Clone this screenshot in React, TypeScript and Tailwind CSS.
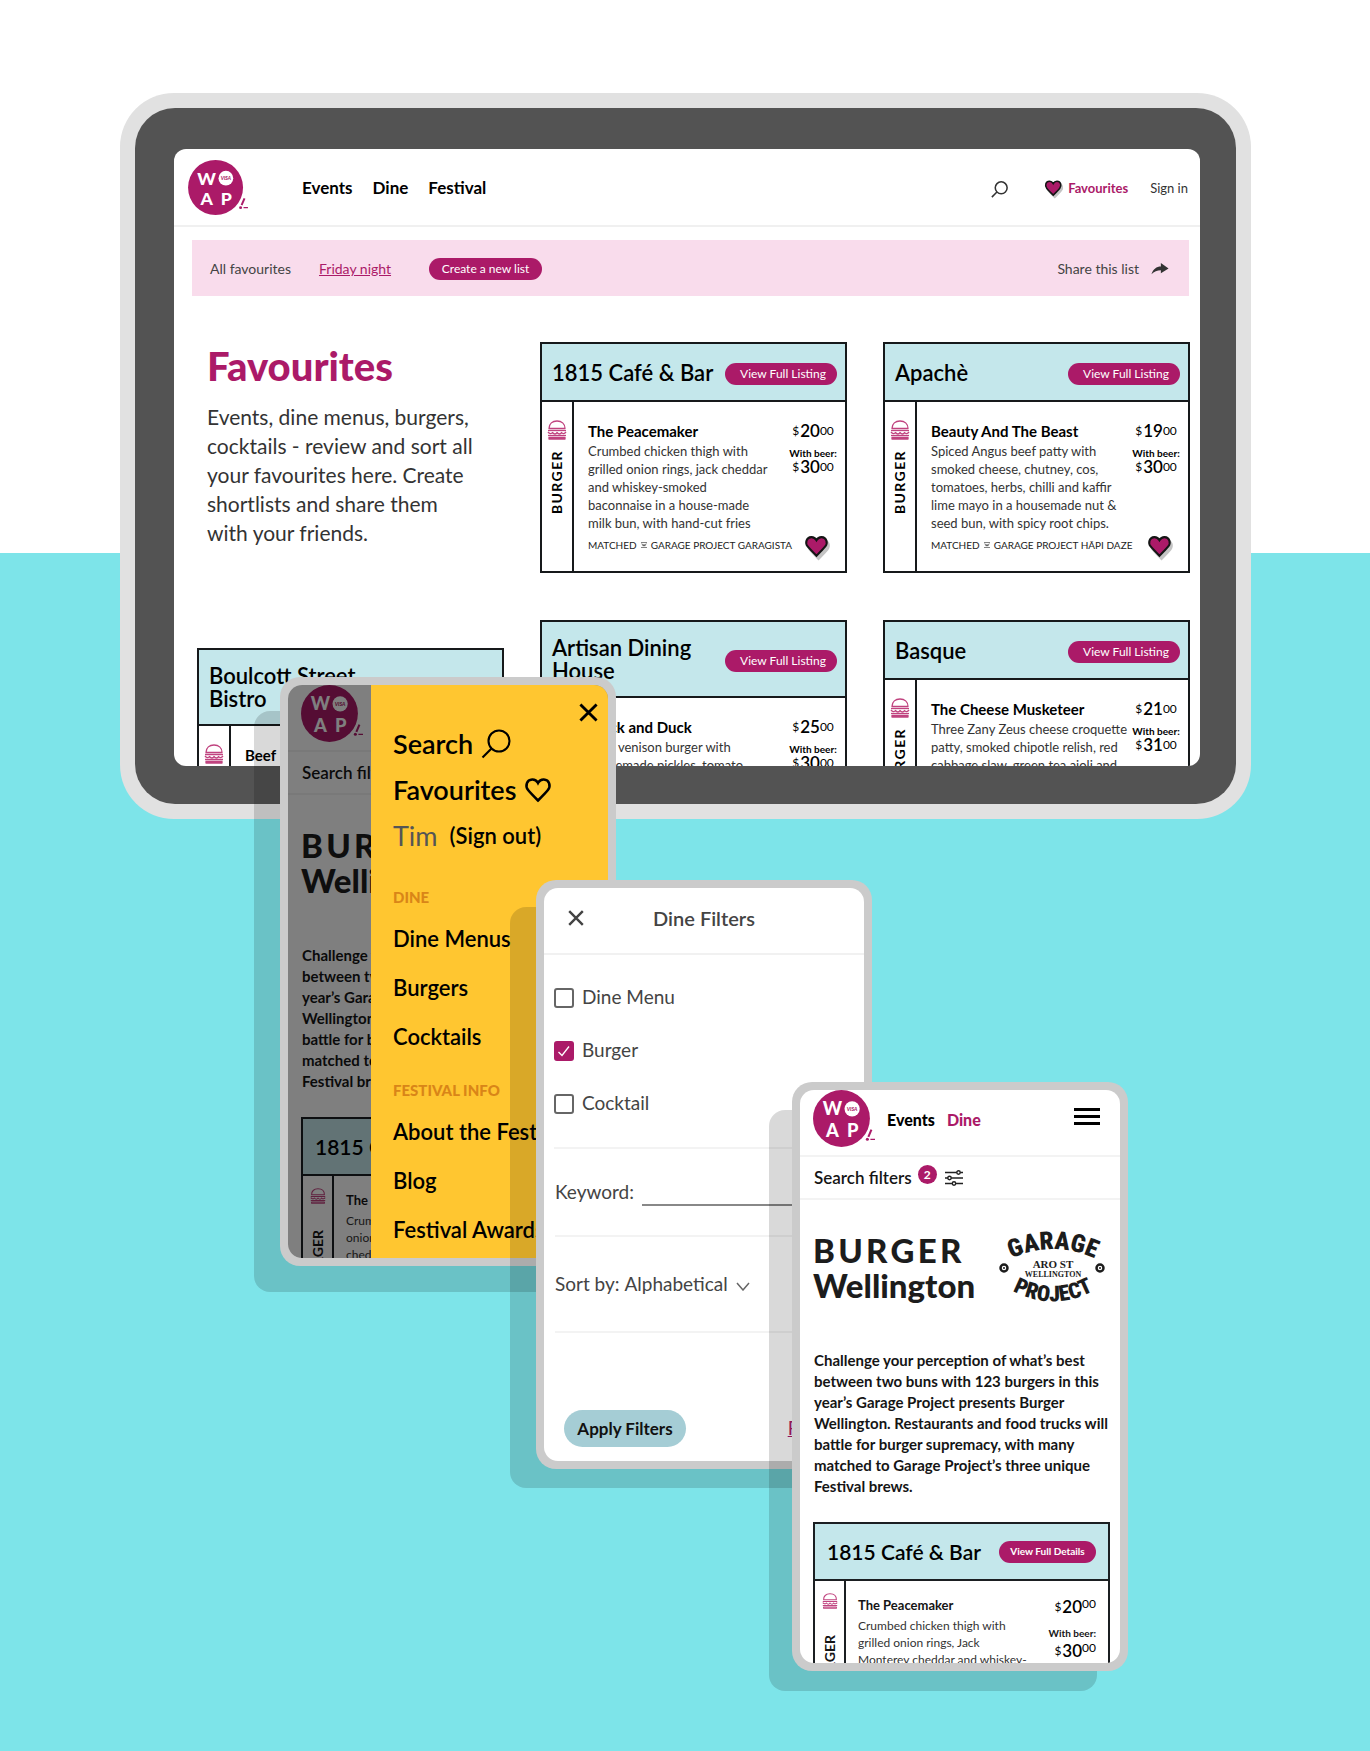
import type { ReactNode } from "react";

function Logo({ className }: { className: string }) {
  return (
    <svg viewBox="0 0 62 56" className={className} role="img" aria-label="Visa Wellington On a Plate">
      <circle cx="28" cy="28" r="28" fill="#ab1a68" />
      <g fill="#fff" fontFamily="Lato, sans-serif" fontWeight="900" fontSize="18" textAnchor="middle">
        <text x="19" y="25">W</text>
        <text x="19" y="46">A</text>
        <text x="39" y="46">P</text>
      </g>
      <circle cx="38.500" cy="18.500" r="7.500" fill="#fff" />
      <text x="38.500" y="20.500" fill="#ab1a68" fontFamily="Lato, sans-serif" fontWeight="900" fontStyle="italic" fontSize="5" textAnchor="middle">
        VISA
      </text>
      <path d="M57.500 39 L54.500 46" stroke="#ab1a68" strokeWidth="2" />
      <circle cx="53.500" cy="48.500" r="1.500" fill="#ab1a68" />
      <path d="M56.500 48.500 H61" stroke="#ab1a68" strokeWidth="1.200" />
    </svg>
  );
}

function SearchIcon({ className, strokeWidth = 1.6 }: { className: string; strokeWidth?: number }) {
  return (
    <svg viewBox="0 0 20 20" className={className} fill="none" stroke="currentColor" strokeWidth={strokeWidth} aria-hidden="true">
      <circle cx="12" cy="8" r="7" />
      <path d="M7 13 L1 19" />
    </svg>
  );
}

const HEART = "M12 21 C9 18 5.500 14.500 3.500 12 C0.800 8.500 2.200 3.300 7 3 C9.300 2.900 11 4.200 12 6 C13 4.200 14.700 2.900 17 3 C21.800 3.300 23.200 8.500 20.500 12 C18.500 14.500 15 18 12 21 Z";

function FullHeart({ className }: { className: string }) {
  return (
    <svg viewBox="0 0 26 26" className={className} aria-hidden="true">
      <path d={HEART} fill="#c4c4c4" stroke="#c4c4c4" strokeWidth="2" transform="translate(2 3)" />
      <path d={HEART} fill="#ab1a68" stroke="#151515" strokeWidth="2" />
    </svg>
  );
}

function BurgerIcon({ className }: { className: string }) {
  return (
    <svg viewBox="0 0 20 20" className={className} fill="none" stroke="#c0437f" strokeWidth="1.300" strokeLinejoin="round" aria-hidden="true">
      <path d="M2 8.500 C2 3.500 5.500 1 10 1 C14.500 1 18 3.500 18 8.500 Z" />
      <path d="M1 10.500 H19" />
      <path d="M1 12 C2.500 14 4.500 14 5.500 12.500 C7 14.500 9 14.500 10 12.500 C11.500 14.500 13.500 14.500 14.500 12.500 C15.500 14 17.500 14 19 12" />
      <path d="M1 15.500 H19" />
      <path d="M2 17.500 H18 V19 H2 Z" />
    </svg>
  );
}

function CloseIcon({ className }: { className: string }) {
  return (
    <svg viewBox="0 0 20 20" className={className} fill="none" stroke="currentColor" strokeWidth="3" aria-hidden="true">
      <path d="M1.500 1.500 L18.500 18.500 M18.500 1.500 L1.500 18.500" />
    </svg>
  );
}

function Price({ amount, raised = false }: { amount: string; raised?: boolean }) {
  return (
    <span className="flex h-5 items-center text-black">
      <span className="mr-px text-xs">$</span>
      <span className="text-[17px] font-semibold">{amount}</span>
      <span className={raised ? "mb-1.5 text-xs leading-none" : "text-xs leading-none"}>00</span>
    </span>
  );
}

type Item = {
  title: string[];
  name: string;
  lines: string[];
  price: string;
  beer: string;
  matched: string;
};

function ListingCard({ title, name, lines, price, beer, matched }: Item) {
  return (
    <article className="border-2 border-[#16191b] bg-white">
      <header className="flex min-h-[58px] items-center justify-between border-b-2 border-[#16191b] bg-[#c4e7eb] py-3.5 pr-2 pl-2.5 text-black">
        <h2 className="text-[22px] leading-[23px] font-semibold whitespace-nowrap">
          {title.map((t) => (
            <span key={t} className="block">{t}</span>
          ))}
        </h2>
        <button className="mt-1 h-[22px] w-28 shrink-0 rounded-full bg-[#ab1a68] pl-1 text-xs text-white">View Full Listing</button>
      </header>
      <div className="flex">
        <div className="flex w-[32px] shrink-0 flex-col items-center gap-2.5 border-r-2 border-[#16191b] pt-[18px]">
          <BurgerIcon className="size-5" />
          <span className="rotate-180 text-sm leading-none font-bold tracking-widest [writing-mode:vertical-rl]">BURGER</span>
        </div>
        <div className="min-w-0 flex-1 pt-[19px] pr-2 pb-[14px] pl-3.5">
          <div className="flex justify-between">
            <div className="whitespace-nowrap">
              <h3 className="mb-px text-[15px] leading-5 font-bold text-black">{name}</h3>
              <p className="text-[13px] leading-[18px] text-[#333]">
                {lines.map((l) => (
                  <span key={l} className="block">{l}</span>
                ))}
              </p>
            </div>
            <div className="-ml-4 flex w-12 shrink-0 flex-col items-center whitespace-nowrap">
              <Price amount={price} />
              <span className="mt-1.5 text-[10px] leading-3 font-bold">With beer:</span>
              <span className="flex h-4 items-center"><Price amount={beer} /></span>
            </div>
          </div>
          <div className="mt-px flex h-6 items-center justify-between">
            <p className="flex items-center gap-1 text-[10px] whitespace-nowrap text-[#222]">
              MATCHED
              <svg viewBox="0 0 8 8" className="size-1.5" fill="none" stroke="#444" aria-hidden="true">
                <path d="M0 0.500 H8 M0 7.500 H8 M1 2 L3 5.500 L4 3 L5 5.500 L7 2" />
              </svg>
              {matched}
            </p>
            <button aria-label="Remove from favourites" className="mt-1 mr-1.5">
              <FullHeart className="size-[27px]" />
            </button>
          </div>
        </div>
      </div>
    </article>
  );
}

const CAFE: Item = {
  title: ["1815 Café & Bar"],
  name: "The Peacemaker",
  lines: ["Crumbed chicken thigh with", "grilled onion rings, jack cheddar", "and whiskey-smoked", "baconnaise in a house-made", "milk bun, with hand-cut fries"],
  price: "20",
  beer: "30",
  matched: "GARAGE PROJECT GARAGISTA",
};
const APACHE: Item = {
  title: ["Apachè"],
  name: "Beauty And The Beast",
  lines: ["Spiced Angus beef patty with", "smoked cheese, chutney, cos,", "tomatoes, herbs, chilli and kaffir", "lime mayo in a housemade nut &", "seed bun, with spicy root chips."],
  price: "19",
  beer: "30",
  matched: "GARAGE PROJECT HĀPI DAZE",
};
const ARTISAN: Item = {
  title: ["Artisan Dining", "House"],
  name: "Truck and Duck",
  lines: ["Wild venison burger with", "housemade pickles, tomato,"],
  price: "25",
  beer: "30",
  matched: "GARAGE PROJECT GARAGISTA",
};
const BASQUE: Item = {
  title: ["Basque"],
  name: "The Cheese Musketeer",
  lines: ["Three Zany Zeus cheese croquette", "patty, smoked chipotle relish, red", "cabbage slaw, green tea aioli and"],
  price: "21",
  beer: "31",
  matched: "GARAGE PROJECT HĀPI DAZE",
};
const BOULCOTT: Item = {
  title: ["Boulcott Street", "Bistro"],
  name: "Beef",
  lines: ["Beef patty with cheddar"],
  price: "25",
  beer: "30",
  matched: "GARAGE PROJECT HĀPI DAZE",
};

function Tablet() {
  return (
    <section className="mr-[119px] ml-[120px] rounded-[54px] bg-[#e1e1e1] p-[15px]">
      <div className="rounded-[40px] bg-[#535353] pt-[41px] pr-9 pb-[38px] pl-[39px]">
        <div className="h-[617px] overflow-hidden rounded-xl bg-white">
          <header className="flex h-[78px] items-center border-b-2 border-[#f0f0f0] pr-3 pl-3.5">
            <a href="#home"><Logo className="h-[55px] w-[61px]" /></a>
            <nav className="mt-0.5 ml-[53px] flex flex-1 gap-5 text-[17px] font-bold text-black">
              <a href="#events">Events</a>
              <a href="#dine">Dine</a>
              <a href="#festival">Festival</a>
            </nav>
            <div className="mt-1 flex items-center text-[13px] text-[#333]">
              <button aria-label="Search"><SearchIcon className="size-[17px]" strokeWidth={1.8} /></button>
              <a href="#favourites" className="ml-9 flex items-center gap-1 font-bold text-[#ab1a68]">
                <FullHeart className="size-5" />
                Favourites
              </a>
              <a href="#signin" className="ml-[22px]">Sign in</a>
            </div>
          </header>
          <div className="mt-[13px] mr-[11px] ml-[18px] flex h-14 items-center bg-[#f9dcec] pt-0.5 pr-5 pl-[18px] text-sm text-[#444]">
            <a href="#all">All favourites</a>
            <a href="#friday" className="ml-7 text-[#ab1a68] underline">Friday night</a>
            <button className="ml-[38px] h-[22px] w-[113px] rounded-full bg-[#ab1a68] text-xs text-white">Create a new list</button>
            <button className="ml-auto flex items-center gap-3">
              Share this list
              <svg viewBox="0 0 20 14" className="h-3 w-[18px]" fill="#333" aria-hidden="true">
                <path d="M0 13 C2 7 6 4 11 4 V0 L20 6.500 L11 12 V8.500 C7 8.500 3 10 0 13 Z" />
              </svg>
            </button>
          </div>
          <main className="mt-[46px] mr-2.5 ml-[23px] grid grid-cols-3 items-start gap-x-9">
            <div>
              <div className="h-[306px] pt-0.5 pl-2.5 whitespace-nowrap">
                <h1 className="text-[40px] leading-[44px] font-black text-[#ab1a68]">Favourites</h1>
                <p className="mt-3.5 text-[21px] leading-[29px] text-[#333]">
                  Events, dine menus, burgers,<br />
                  cocktails - review and sort all<br />
                  your favourites here. Create<br />
                  shortlists and share them<br />
                  with your friends.
                </p>
              </div>
              <ListingCard {...BOULCOTT} />
            </div>
            <div className="flex flex-col gap-[47px]">
              <ListingCard {...CAFE} />
              <ListingCard {...ARTISAN} />
            </div>
            <div className="flex flex-col gap-[47px]">
              <ListingCard {...APACHE} />
              <ListingCard {...BASQUE} />
            </div>
          </main>
        </div>
      </div>
    </section>
  );
}

function Phone({ className, children }: { className: string; children: ReactNode }) {
  return (
    <section className={`absolute h-[589px] w-[336px] rounded-[20px] bg-[#cbcbcb] p-2 ${className}`}>
      <div className="relative h-full overflow-hidden rounded-[14px] bg-white">{children}</div>
    </section>
  );
}

function GarageLogo() {
  return (
    <svg viewBox="0 0 110 74" className="h-[74px] w-[110px]" role="img" aria-label="Garage Project, Aro St Wellington" fill="#1c1c1c">
      <defs>
        <path id="arc-top" d="M10 30 Q55 8 100 30" />
        <path id="arc-bottom" d="M11 59 Q55 84 99 59" />
      </defs>
      <g fontFamily="'Roboto Condensed', Roboto, sans-serif" fontWeight="900" textAnchor="middle">
        <text fontSize="25">
          <textPath href="#arc-top" startOffset="50%">GARAGE</textPath>
        </text>
        <text fontSize="22">
          <textPath href="#arc-bottom" startOffset="50%">PROJECT</textPath>
        </text>
      </g>
      <g fontFamily="'Liberation Serif', serif" fontWeight="700" textAnchor="middle">
        <text x="55" y="38" fontSize="11">ARO ST</text>
        <text x="55" y="47" fontSize="8">WELLINGTON</text>
      </g>
      <g fill="#fff" stroke="#1c1c1c" strokeWidth="2.500">
        <circle cx="6" cy="38" r="3.500" />
        <circle cx="102" cy="38" r="3.500" />
      </g>
      <circle cx="6" cy="38" r="1" />
      <circle cx="102" cy="38" r="1" />
    </svg>
  );
}

function BurgerPage({ lines }: { lines: string[] }) {
  return (
    <div className="text-[#151515]">
      <header className="flex h-[67px] items-start border-b-2 border-[#f3f3f3] pr-5 pl-[13px]">
        <a href="#home"><Logo className="h-[57px] w-[63px]" /></a>
        <nav className="mt-[18px] ml-[11px] flex flex-1 gap-3 text-base leading-6 font-black text-black">
          <a href="#events">Events</a>
          <a href="#dine" className="text-[#ab1a68]">Dine</a>
        </nav>
        <button aria-label="Menu" className="mt-[18px] flex flex-col gap-1">
          <span className="h-[3px] w-[26px] bg-black" />
          <span className="h-[3px] w-[26px] bg-black" />
          <span className="h-[3px] w-[26px] bg-black" />
        </button>
      </header>
      <button className="flex h-[43px] w-full items-center border-b-2 border-[#f3f3f3] pl-3.5 text-[17px] font-semibold whitespace-nowrap">
        Search filters
        <span className="mb-1.5 ml-1.5 flex size-[19px] items-center justify-center rounded-full bg-[#ab1a68] text-xs font-bold text-white">2</span>
        <svg viewBox="0 0 18 16" className="ml-2 h-4 w-[18px]" fill="#fff" stroke="#222" strokeWidth="1.400" aria-hidden="true">
          <path d="M0 2.500 H18 M0 8 H18 M0 13.500 H18" />
          <circle cx="13.500" cy="2.500" r="1.700" />
          <circle cx="4.500" cy="8" r="1.700" />
          <circle cx="9" cy="13.500" r="1.700" />
        </svg>
      </button>
      <div className="flex items-start justify-between pt-[30px] pr-3 pl-[13px]">
        <h1 className="pt-[3px] whitespace-nowrap text-[#1c1c1c]">
          <span className="block text-[33px] leading-[34px] font-black tracking-widest">BURGER</span>
          <span className="block text-[33px] leading-9 font-black">Wellington</span>
        </h1>
        <GarageLogo />
      </div>
      <p className="mt-[46px] pl-3.5 text-[15px] leading-[21px] font-bold whitespace-nowrap">
        Challenge your perception of what’s best<br />
        between two buns with 123 burgers in this<br />
        year’s Garage Project presents Burger<br />
        Wellington. Restaurants and food trucks will<br />
        battle for burger supremacy, with many<br />
        matched to Garage Project’s three unique<br />
        Festival brews.
      </p>
      <article className="mt-[25px] mr-2.5 ml-[13px] border-2 border-[#1b1f22]">
        <header className="flex h-[57px] items-center justify-between border-b-2 border-[#1b1f22] bg-[#c4e7eb] pr-3 pl-3">
          <h2 className="text-[21px] font-semibold whitespace-nowrap text-black">1815 Café &amp; Bar</h2>
          <button className="h-[22px] w-[97px] shrink-0 rounded-full bg-[#ab1a68] text-[10px] font-bold text-white">View Full Details</button>
        </header>
        <div className="flex h-40">
          <div className="flex w-[31px] shrink-0 flex-col items-center gap-[26px] border-r-2 border-[#1b1f22] pt-3">
            <BurgerIcon className="size-4" />
            <span className="rotate-180 text-sm leading-none font-bold [writing-mode:vertical-rl]">BURGER</span>
          </div>
          <div className="flex flex-1 justify-between pt-3.5 pr-3 pl-3">
            <div className="whitespace-nowrap">
              <h3 className="mb-0.5 text-[13px] leading-5 font-bold">The Peacemaker</h3>
              <p className="text-xs leading-[17px] text-[#333]">
                {lines.map((l) => (
                  <span key={l} className="block">{l}</span>
                ))}
              </p>
            </div>
            <div className="-ml-8 flex flex-col items-end pt-0.5 whitespace-nowrap">
              <Price amount="20" raised />
              <span className="mt-2 text-[10px] leading-4 font-bold">With beer:</span>
              <Price amount="30" raised />
            </div>
          </div>
        </div>
      </article>
    </div>
  );
}

function MenuGroup({ title, items }: { title: string; items: string[] }) {
  return (
    <div>
      <h2 className="text-[15px] leading-5 font-black text-[#d98518]">{title}</h2>
      <ul className="mt-[7px] text-[22px] leading-[49px] font-semibold">
        {items.map((i) => (
          <li key={i}><a href="#menu">{i}</a></li>
        ))}
      </ul>
    </div>
  );
}

function SideMenu() {
  return (
    <div className="absolute inset-0 flex bg-black/50">
      <nav className="relative ml-[83px] flex-1 bg-[#ffc630] pl-[22px] whitespace-nowrap text-black">
        <button aria-label="Close menu" className="absolute top-[18px] right-2.5"><CloseIcon className="size-[19px]" /></button>
        <div className="pt-9 text-[27px] leading-[46px] font-semibold">
          <a href="#search" className="flex items-center gap-2">Search <SearchIcon className="size-[30px]" strokeWidth={1.4} /></a>
          <a href="#favourites" className="flex items-center gap-2">
            Favourites
            <svg viewBox="0 0 24 24" className="size-7" fill="none" stroke="currentColor" strokeWidth="2.200" aria-hidden="true"><path d={HEART} /></svg>
          </a>
          <p className="flex items-center gap-3">
            <span className="font-normal text-[#555]">Tim</span>
            <button className="text-[22px] font-semibold">(Sign out)</button>
          </p>
        </div>
        <div className="mt-[28px] flex flex-col gap-[19px]">
          <MenuGroup title="DINE" items={["Dine Menus", "Burgers", "Cocktails"]} />
          <MenuGroup title="FESTIVAL INFO" items={["About the Festival", "Blog", "Festival Awards"]} />
        </div>
      </nav>
    </div>
  );
}

function Option({ label, checked = false }: { label: string; checked?: boolean }) {
  return (
    <label className="flex h-[53px] items-center gap-2">
      <span className="relative flex size-5">
        <input type="checkbox" defaultChecked={checked} className="peer size-5 appearance-none rounded-[3px] border-2 border-[#666] bg-white checked:border-[#ab1a68] checked:bg-[#ab1a68]" />
        <svg viewBox="0 0 20 20" className="pointer-events-none absolute inset-0 hidden size-5 peer-checked:block" fill="none" stroke="#fff" strokeWidth="1.300" aria-hidden="true">
          <path d="M4.500 11 L8 14.500 L15 5.500" />
        </svg>
      </span>
      {label}
    </label>
  );
}

function Filters() {
  return (
    <form className="text-[19px] whitespace-nowrap text-[#444]">
      <header className="grid h-[67px] grid-cols-[60px_1fr_60px] items-center border-b-2 border-[#f1f1f1] pb-1.5">
        <button type="button" aria-label="Close filters" className="ml-6"><CloseIcon className="size-4" /></button>
        <h2 className="text-center text-xl font-semibold">Dine Filters</h2>
      </header>
      <div className="pr-2.5 pl-[11px]">
        <fieldset className="-ml-px border-b-2 border-[#f3f3f3] pt-4 pb-[17px]">
          <Option label="Dine Menu" />
          <Option label="Burger" checked />
          <Option label="Cocktail" />
        </fieldset>
        <label className="flex h-[88px] items-center gap-2 border-b-2 border-[#f3f3f3]">
          Keyword:
          <input type="text" className="h-7 min-w-0 flex-1 border-b-2 border-[#888] bg-transparent outline-none" />
        </label>
        <div className="flex h-24 items-center border-b-2 border-[#f3f3f3]">
          <label htmlFor="sort">Sort by:&nbsp;</label>
          <select id="sort" className="appearance-none bg-transparent">
            <option>Alphabetical</option>
          </select>
          <svg viewBox="0 0 14 9" className="mt-1 ml-2 h-[9px] w-3.5" fill="none" stroke="#666" strokeWidth="1.500" aria-hidden="true">
            <path d="M1 1 L7 8 L13 1" />
          </svg>
        </div>
        <div className="mt-[77px] flex items-center justify-between pr-3 pl-[9px]">
          <button type="button" className="h-[37px] w-[122px] rounded-full bg-[#a5cdd5] text-[17px] font-bold text-[#111]">Apply Filters</button>
          <a href="#reset" className="mr-2 text-[#ab1a68] underline">Reset</a>
        </div>
      </div>
    </form>
  );
}

export default function App() {
  return (
    <div className="relative min-h-screen overflow-hidden bg-[linear-gradient(to_bottom,#fff_553px,#7de4e9_553px)] pt-[93px] font-[Lato,sans-serif]">
      <Tablet />
      <Phone className="top-[677px] left-[280px] shadow-[-30px_30px_0_-4px_rgba(0,0,0,0.15)]">
        <BurgerPage lines={["Crumbed chicken thigh with grilled", "onion rings, Jack Monterey", "cheddar and whiskey-smoked"]} />
        <SideMenu />
      </Phone>
      <Phone className="top-[880px] left-[536px] shadow-[-30px_23px_0_-4px_rgba(0,0,0,0.15)]">
        <Filters />
      </Phone>
      <Phone className="top-[1082px] left-[792px] shadow-[-27px_24px_0_-4px_rgba(0,0,0,0.15)]">
        <BurgerPage lines={["Crumbed chicken thigh with", "grilled onion rings, Jack", "Monterey cheddar and whiskey-"]} />
      </Phone>
    </div>
  );
}
